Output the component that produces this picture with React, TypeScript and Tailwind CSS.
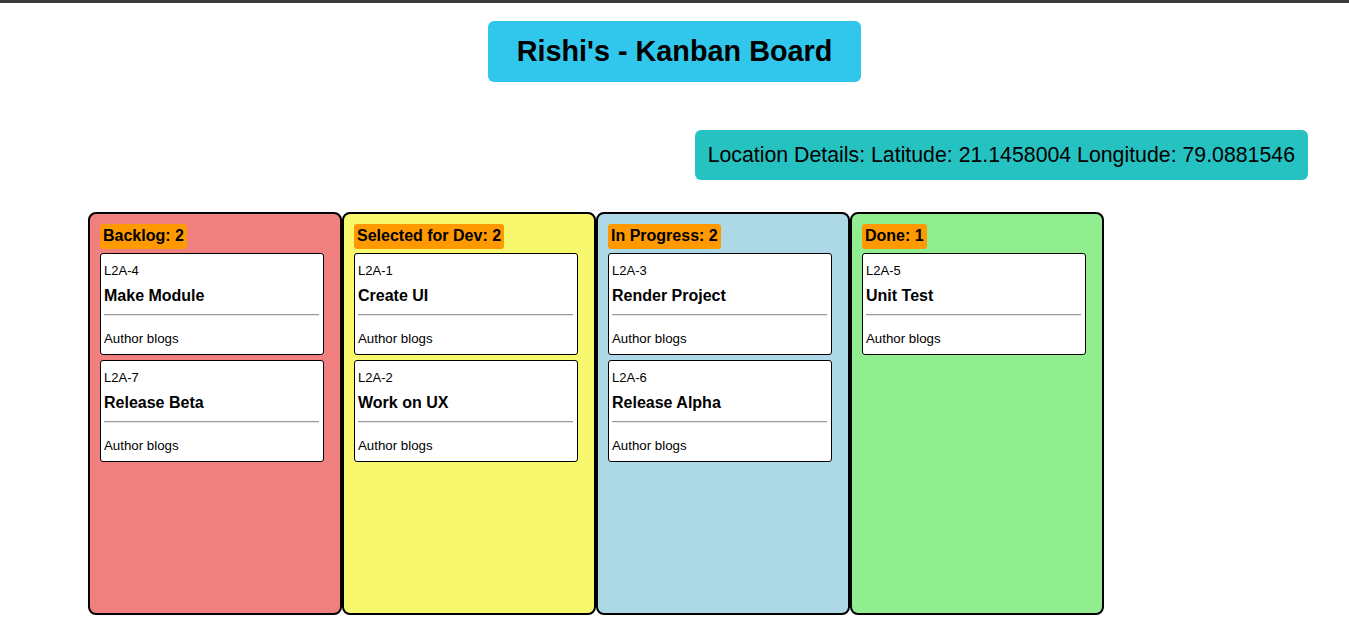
import React from 'react';

interface Task {
  id: string;
  title: string;
  author: string;
}

interface Column {
  name: string;
  bg: string;
  tasks: Task[];
}

const columns: Column[] = [
  {
    name: 'Backlog',
    bg: 'bg-[#f08080]',
    tasks: [
      { id: 'L2A-4', title: 'Make Module', author: 'Author blogs' },
      { id: 'L2A-7', title: 'Release Beta', author: 'Author blogs' },
    ],
  },
  {
    name: 'Selected for Dev',
    bg: 'bg-[#f8f86f]',
    tasks: [
      { id: 'L2A-1', title: 'Create UI', author: 'Author blogs' },
      { id: 'L2A-2', title: 'Work on UX', author: 'Author blogs' },
    ],
  },
  {
    name: 'In Progress',
    bg: 'bg-[#add8e6]',
    tasks: [
      { id: 'L2A-3', title: 'Render Project', author: 'Author blogs' },
      { id: 'L2A-6', title: 'Release Alpha', author: 'Author blogs' },
    ],
  },
  {
    name: 'Done',
    bg: 'bg-[#90ee90]',
    tasks: [{ id: 'L2A-5', title: 'Unit Test', author: 'Author blogs' }],
  },
];

function TaskCard({ task, first }: { task: Task; first: boolean }) {
  return (
    <div
      className={`w-[224px] bg-white border border-black rounded-[3px] px-[3px] pt-[9px] pb-[7px] ${
        first ? 'mt-[4px]' : 'mt-[5px]'
      }`}
    >
      <div className="text-[13px] leading-[16px]">{task.id}</div>
      <div className="mt-[7px] text-[16px] leading-[19px] font-bold">{task.title}</div>
      <div className="mt-[9px] mr-[1px] border-t border-t-[#9a9a9a] border-b border-b-[#e6e6e6]" />
      <div className="mt-[15px] text-[13.3px] leading-[16px]">{task.author}</div>
    </div>
  );
}

export default function App() {
  return (
    <div className="min-h-screen bg-white text-black font-['Liberation_Sans',Arial,sans-serif]">
      <div className="h-[3px] bg-[#3b3b3d]" />

      <div className="flex justify-center pt-[18px]">
        <h1 className="bg-[#31c6ec] rounded-[6px] px-[29px] py-[14px] text-[28.8px] leading-[33px] font-bold">
          Rishi's - Kanban Board
        </h1>
      </div>

      <div className="flex justify-end pr-[41px] mt-[48px]">
        <div className="bg-[#26c2c1] rounded-[6px] px-[13px] py-[13px] text-[21.3px] leading-[24px]">
          Location Details: Latitude: 21.1458004 Longitude: 79.0881546
        </div>
      </div>

      <div className="flex pl-[88px] mt-[32px]">
        {columns.map((col) => (
          <div
            key={col.name}
            className={`w-[254px] h-[403px] border-2 border-black rounded-[8px] p-[10px] ${col.bg}`}
          >
            <span className="inline-block bg-[#ff9900] rounded-[3px] px-[3px] pt-[2px] pb-[3px] text-[16px] leading-[20px] font-bold">
              {col.name}: {col.tasks.length}
            </span>
            {col.tasks.map((t, i) => (
              <TaskCard key={t.id} task={t} first={i === 0} />
            ))}
          </div>
        ))}
      </div>
    </div>
  );
}
